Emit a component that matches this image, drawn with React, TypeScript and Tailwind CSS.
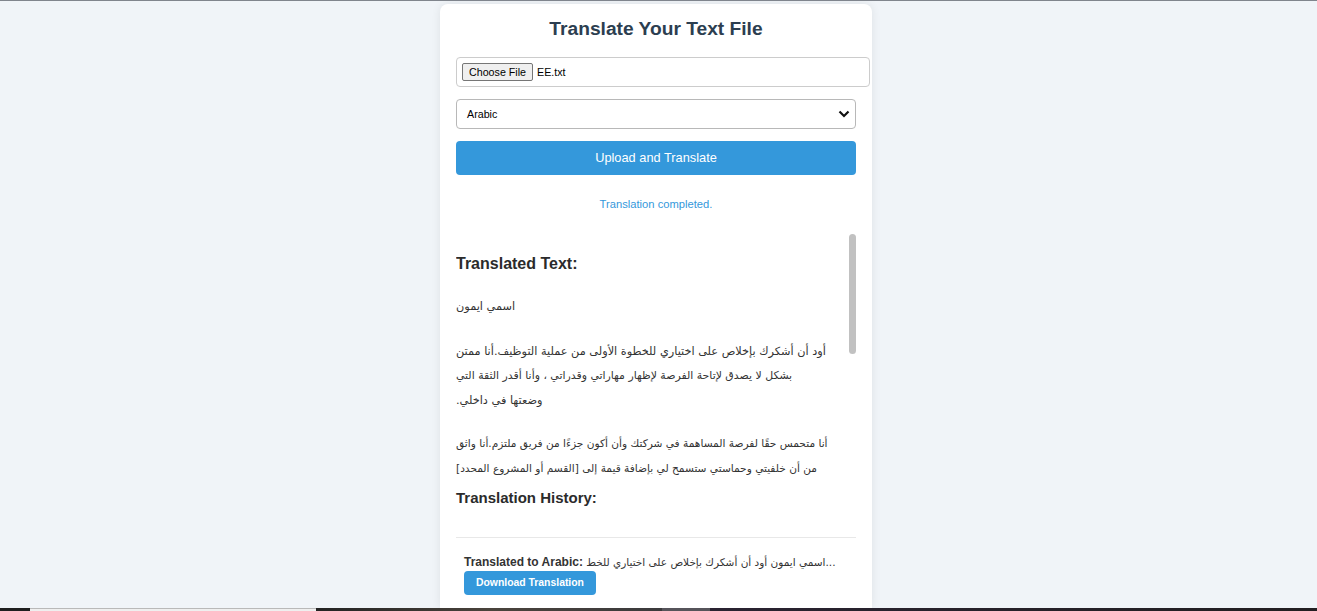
const arabicFont = "font-['DejaVu_Sans','Noto_Sans',sans-serif]";

function FakeFileInput() {
  return (
    <div className="mt-[17px] flex h-[30px] w-[414px] items-center rounded-[4px] border border-[#cccccc] px-[5px]">
      <span className="flex h-[18px] items-center rounded-[2px] border border-[#767676] bg-[#efefef] px-[6px] text-[10.7px] leading-none text-black">
        Choose File
      </span>
      <span className="ml-[4px] text-[10.7px] text-black">EE.txt</span>
    </div>
  );
}

function FakeSelect() {
  return (
    <div className="mt-[12px] flex h-[30px] w-full items-center justify-between rounded-[4px] border border-[#b8b8b8] pl-[10px] pr-[4px]">
      <span className="text-[10.7px] text-black">Arabic</span>
      <svg width="12" height="8" viewBox="0 0 12 8" className="mr-[1px]">
        <path d="M1.5 1.5 L6 6 L10.5 1.5" fill="none" stroke="#111" strokeWidth="2.2" />
      </svg>
    </div>
  );
}

export default function App() {
  return (
    <div className="flex h-[611px] w-full flex-col overflow-hidden bg-[#f0f4f8] font-['Liberation_Sans',Arial,sans-serif]">
      <div className="h-px shrink-0 bg-[#80858d]" />

      <div className="flex min-h-0 flex-1 justify-center overflow-hidden pr-[5px] pt-[3px]">
        <div className="w-[432px] shrink-0 rounded-t-lg bg-white px-4 pt-[14px] shadow-[0_0_10px_rgba(0,0,0,0.08)]">
          <h2 className="text-center text-[19.2px] font-bold leading-[22px] text-[#2c3e50]">
            Translate Your Text File
          </h2>

          <FakeFileInput />
          <FakeSelect />

          <button className="mt-[12px] h-[34px] w-full rounded-[4px] bg-[#3498db] text-[12.8px] text-white">
            Upload and Translate
          </button>

          <p className="mt-[23px] text-center text-[11.2px] leading-[13px] text-[#3498db]">
            Translation completed.
          </p>

          {/* result box */}
          <div className="relative mt-[23px] h-[245px] overflow-hidden">
            <div className="pr-[10px] pt-[20px]">
              <h3 className="text-[16px] font-bold leading-[19px] text-[#2b2b2b]">Translated Text:</h3>
              <div className={`${arabicFont} mt-[22px] text-[11.3px] leading-[24.5px] text-[#333333]`}>
                <p dir="rtl" className="text-left">اسمي ايمون</p>
                <div className="mt-[20px]">
                  <p dir="rtl" className="whitespace-nowrap text-left">أود أن أشكرك بإخلاص على اختياري للخطوة الأولى من عملية التوظيف.أنا ممتن</p>
                  <p dir="rtl" className="whitespace-nowrap text-left text-[10.9px]">بشكل لا يصدق لإتاحة الفرصة لإظهار مهاراتي وقدراتي ، وأنا أقدر الثقة التي</p>
                  <p dir="rtl" className="whitespace-nowrap text-left">وضعتها في داخلي.</p>
                </div>
                <div className="mt-[18px] text-[10.6px]">
                  <p dir="rtl" className="whitespace-nowrap text-left">أنا متحمس حقًا لفرصة المساهمة في شركتك وأن أكون جزءًا من فريق ملتزم.أنا واثق</p>
                  <p dir="rtl" className="whitespace-nowrap text-left">من أن خلفيتي وحماستي ستسمح لي بإضافة قيمة إلى [القسم أو المشروع المحدد]</p>
                </div>
              </div>
            </div>
            <div className="absolute right-0 top-0 h-[120px] w-[7px] rounded-full bg-[#c1c1c1]" />
          </div>

          {/* history */}
          <h3 className="mt-[10px] text-[15px] font-bold leading-[18px] text-[#2b2b2b]">Translation History:</h3>
          <ul className="mt-[30px]">
            <li className="border-t border-[#e8e8e8] px-[8px] pt-[17px]">
              <p className="whitespace-nowrap text-[12px] leading-[14px] text-[#333333]">
                <span className="font-bold">Translated to Arabic:</span>{' '}
                <span className={`${arabicFont} text-[10.5px]`}>اسمي ايمون أود أن أشكرك بإخلاص على اختياري للخط...</span>
              </p>
              <button className="h-[24px] rounded-[4px] bg-[#3498db] px-[12px] text-[10.4px] font-bold text-white">
                Download Translation
              </button>
            </li>
          </ul>
        </div>
      </div>

      {/* taskbar edge */}
      <div className="flex h-[3px] shrink-0">
        <div className="w-[30px] bg-[#1f1f1f]" />
        <div className="w-[286px] border-t border-[#b9b9b9] bg-[#efefef]" />
        <div className="w-[346px] bg-gradient-to-r from-[#232323] via-[#4a433c] to-[#3b3a3c]" />
        <div className="w-[48px] bg-[#56545a]" />
        <div className="flex-1 bg-gradient-to-r from-[#2a2331] to-[#221f22]" />
      </div>
    </div>
  );
}
